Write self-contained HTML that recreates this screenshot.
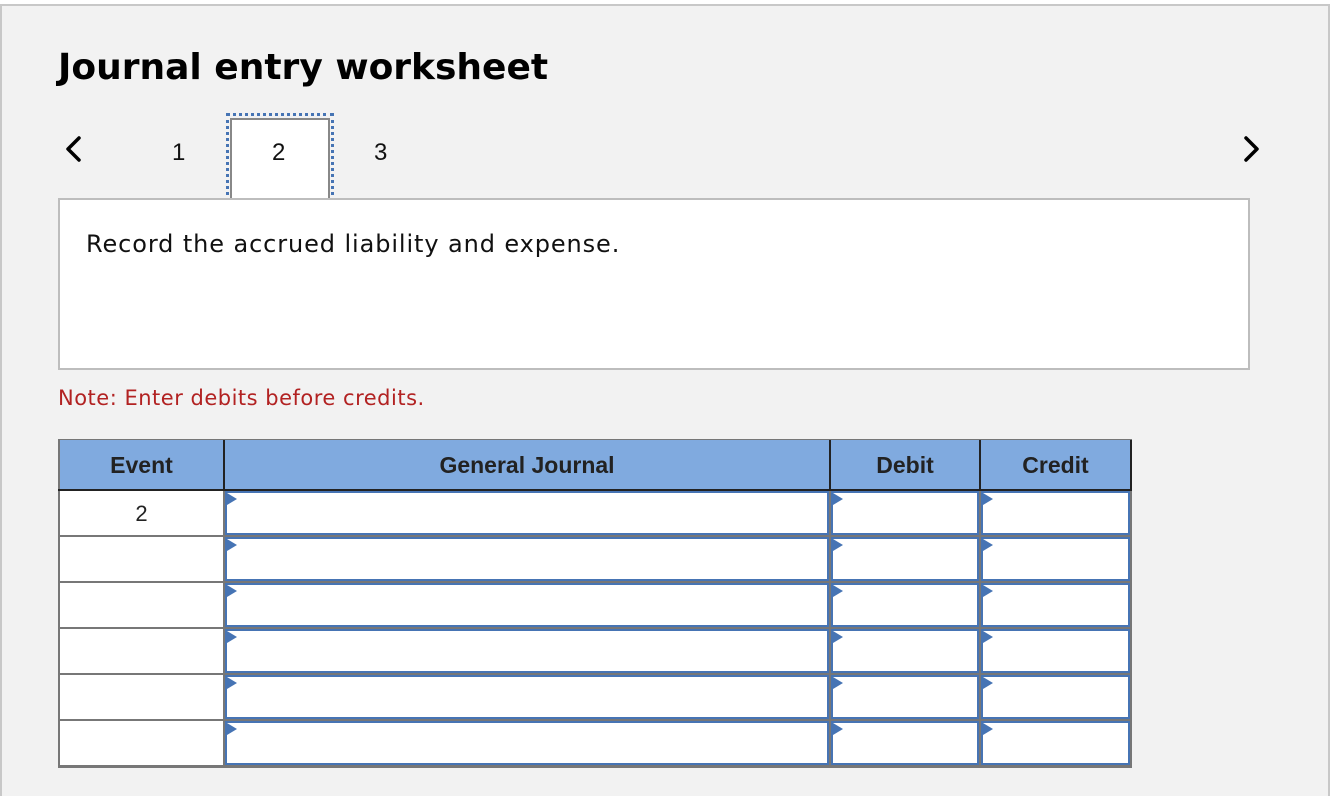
<!DOCTYPE html>
<html><head><style>
body{margin:0;width:1340px;height:788px;background:#fff;position:relative;overflow:hidden;font-family:"Liberation Sans",Arial,sans-serif;}
.panel{position:absolute;left:0;top:4px;width:1326px;height:790px;background:#f2f2f2;border-left:2px solid #c8c8c8;border-top:2px solid #c8c8c8;border-right:2px solid #c8c8c8;}
.a{position:absolute;}
h1{position:absolute;left:58px;top:47px;margin:0;font-family:"DejaVu Sans",sans-serif;font-size:36px;font-weight:bold;color:#000;}
.num{position:absolute;font-size:24px;color:#111;top:139px}
.box{position:absolute;left:58px;top:198px;width:1188px;height:168px;background:#fff;border:2px solid #bdbdbd}
.cell{position:absolute;background:#fff;box-sizing:border-box;}
.inp{position:absolute;background:#fff;border:2px solid #4674b4;box-sizing:border-box}
.tri{position:absolute;left:0;top:0;width:0;height:0;border-top:6px solid transparent;border-bottom:6px solid transparent;border-left:10px solid #4674b4}
.hd{position:absolute;top:440px;height:51px;background:#80aadf;font-weight:bold;font-size:23px;color:#222;text-align:center;line-height:51px;box-sizing:border-box}
</style></head><body>
<div class="panel"></div>
<h1>Journal entry worksheet</h1>
<svg class="a" style="left:62px;top:134px" width="24" height="30"><path d="M17 4 L6 15 L17 26" stroke="#000" stroke-width="3.5" fill="none" stroke-linecap="round" stroke-linejoin="round"/></svg>
<svg class="a" style="left:1240px;top:134px" width="24" height="30"><path d="M6 4 L17 15 L6 26" stroke="#000" stroke-width="3.5" fill="none" stroke-linecap="round" stroke-linejoin="round"/></svg>
<div class="num" style="left:172px">1</div>
<div class="a" style="left:226px;top:113px;width:108px;height:88px;border:3px dotted #4674b4;box-sizing:border-box"></div>
<div class="a" style="left:230px;top:118px;width:100px;height:84px;background:#fff;border:2px solid #888;border-bottom:none;box-sizing:border-box"></div>
<div class="num" style="left:272px">2</div>
<div class="num" style="left:374px">3</div>
<div class="box"></div>
<div class="a" style="left:86px;top:230px;font-family:'DejaVu Sans',sans-serif;font-size:24px;letter-spacing:0.9px;color:#111">Record the accrued liability and expense.</div>
<div class="a" style="left:58px;top:386px;font-family:'DejaVu Sans',sans-serif;font-size:21px;letter-spacing:0.5px;color:#b22222">Note: Enter debits before credits.</div>
<div class="a" style="left:58px;top:439px;width:1074px;height:329px;background:#777"></div>
<div class="hd" style="left:60px;width:163px">Event</div>
<div class="hd" style="left:225px;width:604px">General Journal</div>
<div class="hd" style="left:831px;width:148px">Debit</div>
<div class="hd" style="left:981px;width:149px">Credit</div>
<div class="a" style="left:58px;top:489px;width:1074px;height:2px;background:#222"></div>
<div class="a" style="left:223px;top:440px;width:2px;height:51px;background:#222"></div>
<div class="a" style="left:829px;top:440px;width:2px;height:51px;background:#222"></div>
<div class="a" style="left:979px;top:440px;width:2px;height:51px;background:#222"></div>
<div class="a" style="left:1130px;top:440px;width:2px;height:51px;background:#222"></div>
<div id="rows"></div>
<script>
var h='';
for(var i=0;i<6;i++){var t=491+i*46;
h+='<div class="cell" style="left:60px;top:'+t+'px;width:163px;height:44px;text-align:center;font-size:22px;line-height:46px;color:#222">'+(i==0?'2':'')+'</div>';
[[225,604],[831,148],[981,149]].forEach(function(c){
h+='<div class="inp" style="left:'+c[0]+'px;top:'+t+'px;width:'+c[1]+'px;height:44px"><div class="tri"></div></div>';});
}
document.getElementById('rows').innerHTML=h;
</script>
</body></html>
